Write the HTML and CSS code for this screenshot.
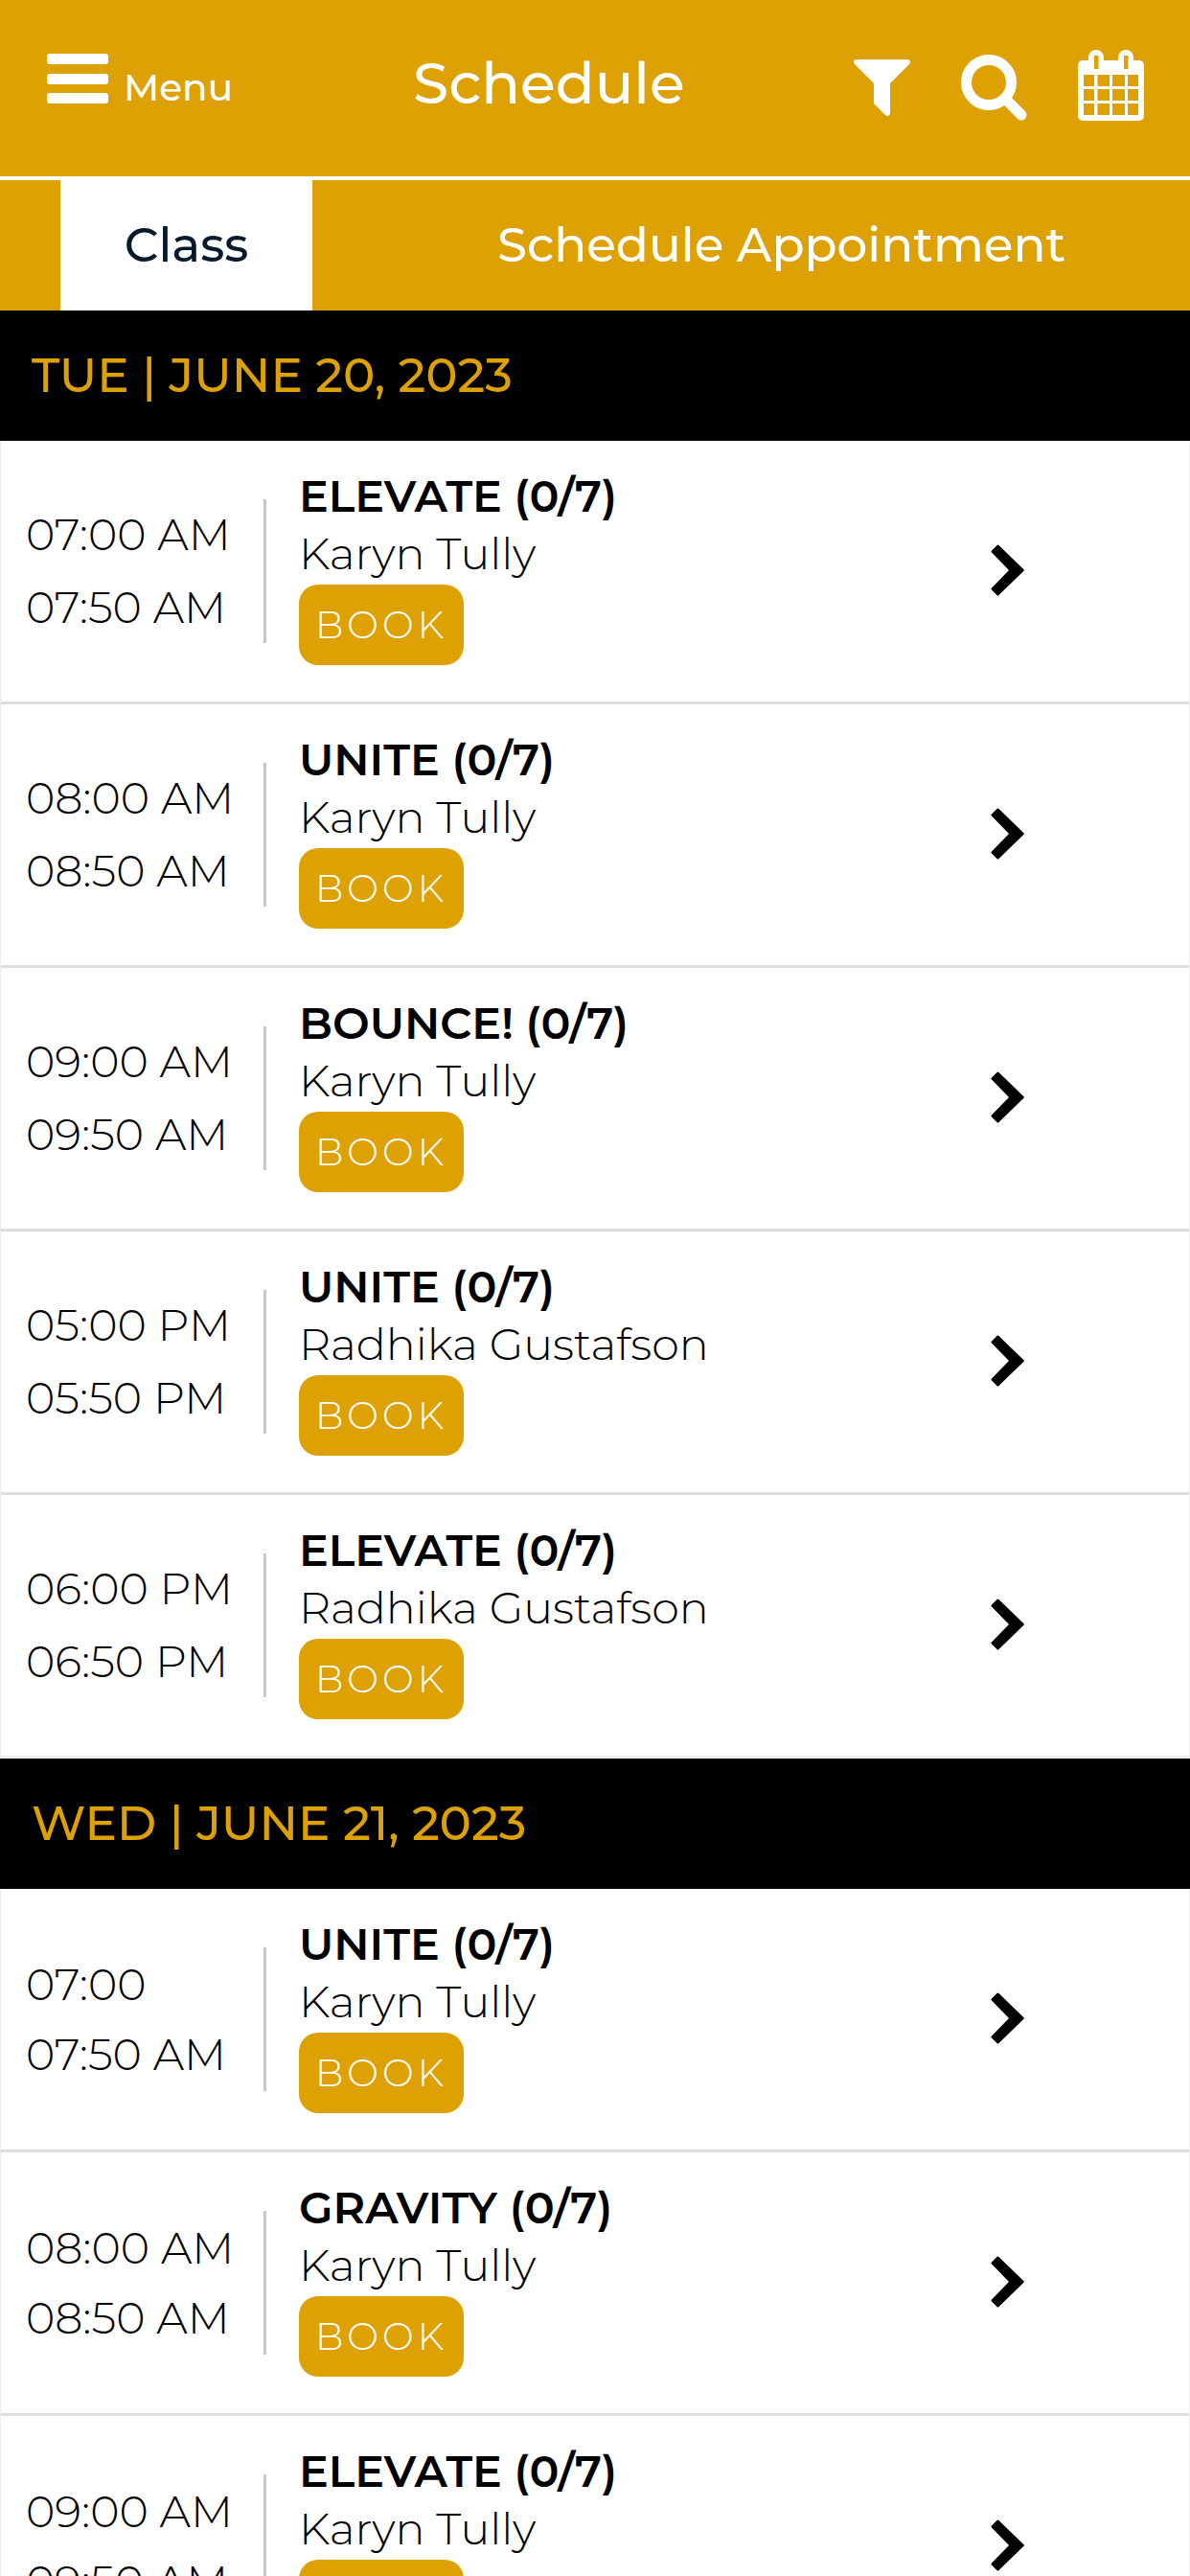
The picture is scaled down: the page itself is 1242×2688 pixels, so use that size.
FILE: index.html
```html
<!DOCTYPE html>
<html lang="en">
<head>
<meta charset="utf-8">
<meta name="viewport" content="width=device-width, initial-scale=1">
<title>Schedule</title>
<link rel="stylesheet" href="styles.css">
</head>
<body>
<svg class="sprite" aria-hidden="true">
  <symbol id="chevron" viewBox="0 0 35 54"><path d="M1 6.500 6.500 1Q7.500 0 8.500 1L34.500 26.300Q35.200 27 34.500 27.700L8.500 53Q7.500 54 6.500 53L1 47.500Q0 46.500 1 45.500L19 27 1 8.500Q0 7.500 1 6.500Z"/></symbol>
</svg>

<header class="topbar">
  <button class="menu" type="button">
    <svg class="menu-icon" viewBox="0 0 64 52" aria-hidden="true"><rect width="64" height="11" rx="3"/><rect y="21" width="64" height="11" rx="3"/><rect y="41" width="64" height="11" rx="3"/></svg>
    <span>Menu</span>
  </button>
  <h1 class="title">Schedule</h1>
  <div class="actions">
    <button class="action" type="button" aria-label="Filter">
      <svg width="59" height="74" viewBox="0 -10 59 74"><path d="M3 0H56c3 0 4 3 2 5L38 25V56c0 3-3 4-5 2L21 46V25L1 5C-1 3 0 0 3 0Z"/></svg>
    </button>
    <button class="action" type="button" aria-label="Search">
      <svg width="69" height="74" viewBox="0 -5 69 74"><path class="stroke" d="M49 49 63 63"/><circle class="stroke" cx="29" cy="29" r="23.500"/></svg>
    </button>
    <button class="action" type="button" aria-label="Calendar">
      <svg width="69" height="74" viewBox="0 0 69 74"><path fill-rule="evenodd" d="M5 11H11V8a8 8 0 0 1 16 0V11H42V8a8 8 0 0 1 16 0V11H64a5 5 0 0 1 5 5V69a5 5 0 0 1-5 5H5a5 5 0 0 1-5-5V16a5 5 0 0 1 5-5ZM17 6V20H21.500V6ZM48 6V20H52.500V6ZM6 26V38H17V26ZM20.500 26V38H33V26ZM36 26V38H49V26ZM52 26V38H63V26ZM6 41V53H17V41ZM20.500 41V53H33V41ZM36 41V53H49V41ZM52 41V53H63V41ZM6 56V68H17V56ZM20.500 56V68H33V56ZM36 56V68H49V56ZM52 56V68H63V56Z"/></svg>
    </button>
  </div>
</header>

<nav class="tabs">
  <a class="tab tab-active" href="#class" aria-current="page">Class</a>
  <a class="tab" href="#appointment">Schedule Appointment</a>
</nav>

<main>
  <section>
    <h2 class="day">TUE | JUNE 20, 2023</h2>
    <ul class="list">
      <li class="row">
        <div class="times"><time>07:00 AM</time><time>07:50 AM</time></div>
        <div class="info"><h3 class="name">ELEVATE (0/7)</h3><p class="trainer">Karyn Tully</p><button class="book" type="button">BOOK</button></div>
        <a class="more" href="#details" aria-label="Class details"><svg><use href="#chevron"/></svg></a>
      </li>
      <li class="row">
        <div class="times"><time>08:00 AM</time><time>08:50 AM</time></div>
        <div class="info"><h3 class="name">UNITE (0/7)</h3><p class="trainer">Karyn Tully</p><button class="book" type="button">BOOK</button></div>
        <a class="more" href="#details" aria-label="Class details"><svg><use href="#chevron"/></svg></a>
      </li>
      <li class="row">
        <div class="times"><time>09:00 AM</time><time>09:50 AM</time></div>
        <div class="info"><h3 class="name">BOUNCE! (0/7)</h3><p class="trainer">Karyn Tully</p><button class="book" type="button">BOOK</button></div>
        <a class="more" href="#details" aria-label="Class details"><svg><use href="#chevron"/></svg></a>
      </li>
      <li class="row">
        <div class="times"><time>05:00 PM</time><time>05:50 PM</time></div>
        <div class="info"><h3 class="name">UNITE (0/7)</h3><p class="trainer">Radhika Gustafson</p><button class="book" type="button">BOOK</button></div>
        <a class="more" href="#details" aria-label="Class details"><svg><use href="#chevron"/></svg></a>
      </li>
      <li class="row">
        <div class="times"><time>06:00 PM</time><time>06:50 PM</time></div>
        <div class="info"><h3 class="name">ELEVATE (0/7)</h3><p class="trainer">Radhika Gustafson</p><button class="book" type="button">BOOK</button></div>
        <a class="more" href="#details" aria-label="Class details"><svg><use href="#chevron"/></svg></a>
      </li>
    </ul>
  </section>
  <section>
    <h2 class="day">WED | JUNE 21, 2023</h2>
    <ul class="list list-tight">
      <li class="row">
        <div class="times"><time>07:00</time><time>07:50 AM</time></div>
        <div class="info"><h3 class="name">UNITE (0/7)</h3><p class="trainer">Karyn Tully</p><button class="book" type="button">BOOK</button></div>
        <a class="more" href="#details" aria-label="Class details"><svg><use href="#chevron"/></svg></a>
      </li>
      <li class="row">
        <div class="times"><time>08:00 AM</time><time>08:50 AM</time></div>
        <div class="info"><h3 class="name">GRAVITY (0/7)</h3><p class="trainer">Karyn Tully</p><button class="book" type="button">BOOK</button></div>
        <a class="more" href="#details" aria-label="Class details"><svg><use href="#chevron"/></svg></a>
      </li>
      <li class="row">
        <div class="times"><time>09:00 AM</time><time>09:50 AM</time></div>
        <div class="info"><h3 class="name">ELEVATE (0/7)</h3><p class="trainer">Karyn Tully</p><button class="book" type="button">BOOK</button></div>
        <a class="more" href="#details" aria-label="Class details"><svg><use href="#chevron"/></svg></a>
      </li>
    </ul>
  </section>
</main>
</body>
</html>
```
FILE: styles.css
```css
:root {
  --gold: #dda103;
  --line: #dedede;
}

* {
  box-sizing: border-box;
}

body {
  margin: 0;
  background: #fff;
  color: #000;
  font-family: Montserrat, Inter, "Liberation Sans", sans-serif;
  font-size: 46px;
  font-weight: 300;
}

button {
  margin: 0;
  padding: 0;
  border: 0;
  background: none;
  color: inherit;
  font: inherit;
  cursor: pointer;
}

svg {
  display: block;
  fill: currentColor;
}

.sprite {
  display: none;
}

/* Top bar */
.topbar {
  display: flex;
  align-items: flex-start;
  padding: 52px 48px 58px 49px;
  border-bottom: 4px solid #fff;
  background: var(--gold);
  color: #fff;
}

.menu {
  display: flex;
  align-items: flex-start;
  gap: 16px;
  padding-top: 4px;
  font-size: 39px;
  font-weight: 500;
  line-height: 70px;
}

.menu-icon {
  width: 64px;
  height: 52px;
}

.title {
  flex: 1;
  margin: 0;
  padding-left: 188px;
  font-size: 60px;
  font-weight: 500;
  line-height: 70px;
}

.actions {
  display: flex;
  gap: 53px;
}

.stroke {
  fill: none;
  stroke: currentColor;
  stroke-width: 11px;
  stroke-linecap: round;
}

/* Tabs */
.tabs {
  display: flex;
  justify-content: space-around;
  background: var(--gold);
}

.tab {
  padding: 0 67px;
  color: #fff;
  font-size: 50px;
  font-weight: 500;
  line-height: 136px;
  text-decoration: none;
}

.tab-active {
  background: #fff;
  color: #061a2b;
}

/* Day heading */
.day {
  margin: 0;
  padding: 0 33px;
  background: #000;
  color: var(--gold);
  font-size: 50px;
  font-weight: 500;
  line-height: 136px;
}

/* Class rows */
.list {
  margin: 0;
  padding: 0;
  border: solid #eee;
  border-width: 0 1px;
  list-style: none;
}

.row {
  display: flex;
  align-items: center;
  padding-right: 172px;
  border-bottom: 3px solid var(--line);
}

.row:last-child {
  border-bottom-color: #eee;
}

.times {
  display: flex;
  flex-direction: column;
  justify-content: center;
  width: 277px;
  height: 150px;
  padding-left: 26px;
  border-right: 3px solid #c8c8c8;
  line-height: 76px;
}

.list-tight .times {
  line-height: 73px;
}

.info {
  flex: 1;
  padding: 28px 0 38px 34px;
  line-height: 60px;
}

.name {
  margin: 0;
  font-size: 46px;
  font-weight: 600;
}

.trainer {
  margin: 0 0 2px;
}

.book {
  display: block;
  padding: 0 17px;
  border-radius: 20px;
  background: var(--gold);
  color: #fff;
  font-size: 39px;
  line-height: 84px;
  letter-spacing: 4px;
}

.more {
  padding-bottom: 2px;
  color: #000;
}

.more svg {
  width: 35px;
  height: 54px;
}
```
